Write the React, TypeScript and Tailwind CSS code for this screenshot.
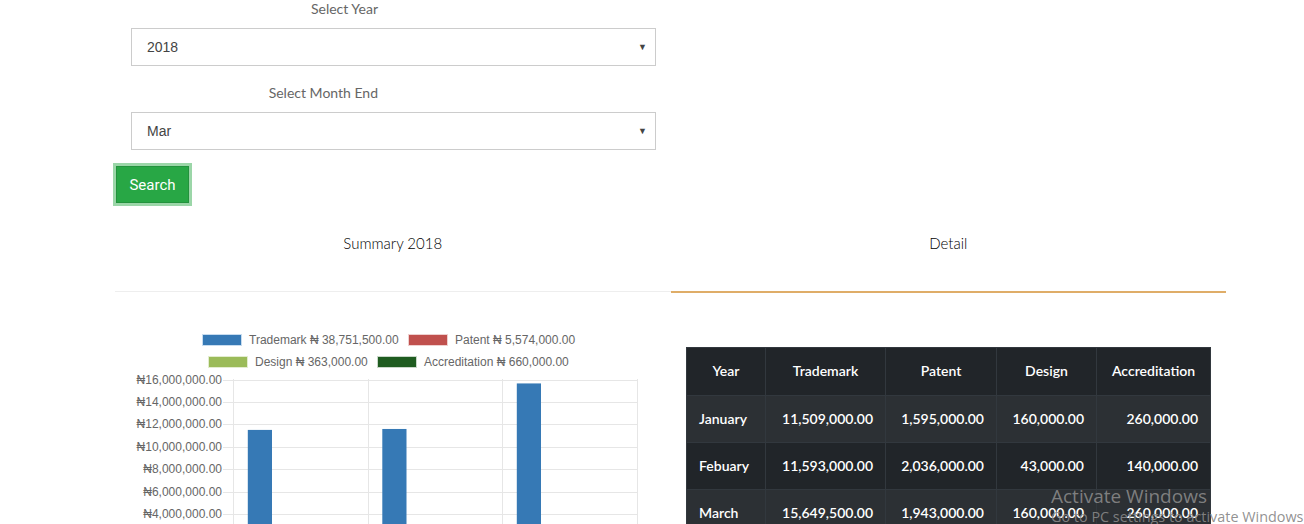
import React from "react";

function FakeSelect({ value, className }: { value: string; className?: string }) {
  return (
    <div
      className={`relative flex h-[38px] w-[525px] items-center border border-[#ccc] bg-white pl-[15px] pt-[1px] font-['Liberation_Sans',Arial,sans-serif] text-[14px] text-[#444] ${className ?? ""}`}
    >
      {value}
      <span className="absolute right-[8px] top-[14px] text-[9px] leading-[9px] text-[#444]">▼</span>
    </div>
  );
}

const gridYs = Array.from({ length: 9 }, (_, i) => 86.5 + i * 22.45);
const yLabels = [
  "₦16,000,000.00",
  "₦14,000,000.00",
  "₦12,000,000.00",
  "₦10,000,000.00",
  "₦8,000,000.00",
  "₦6,000,000.00",
  "₦4,000,000.00",
  "₦2,000,000.00",
  "₦0.00",
];
const datasets = [
  { color: "#3679b5", values: [11509000, 11593000, 15649500] },
  { color: "#c0504d", values: [1595000, 2036000, 1943000] },
  { color: "#9bbb59", values: [160000, 43000, 160000] },
  { color: "#1f5c20", values: [260000, 140000, 260000] },
];
const zeroY = 86.5 + 8 * 22.45;

function Chart() {
  return (
    <svg width={555} height={231} className="block" style={{ fontFamily: "'Liberation Sans', Arial, sans-serif" }}>
      <rect x={87.5} y={41.5} width={39} height={11} fill="#3679b5" stroke="#c7dcef" />
      <text x={134} y={47} dominantBaseline="central" fontSize={12} fill="#666">Trademark ₦ 38,751,500.00</text>
      <rect x={293.5} y={41.5} width={39} height={11} fill="#c0504d" stroke="#efd0cf" />
      <text x={340} y={47} dominantBaseline="central" fontSize={12} fill="#666">Patent ₦ 5,574,000.00</text>
      <rect x={93.5} y={63.5} width={39} height={11} fill="#9bbb59" stroke="#e3edcf" />
      <text x={140} y={69} dominantBaseline="central" fontSize={12} fill="#666">Design ₦ 363,000.00</text>
      <rect x={262.5} y={63.5} width={39} height={11} fill="#1f5c20" stroke="#c9d8c9" />
      <text x={309} y={69} dominantBaseline="central" fontSize={12} fill="#666">Accreditation ₦ 660,000.00</text>

      {gridYs.map((y, i) => (
        <line key={"h" + i} x1={108} x2={522} y1={Math.round(y) + 0.5} y2={Math.round(y) + 0.5} stroke="#e6e6e6" />
      ))}
      {[118, 252.5, 387, 522].map((x, i) => (
        <line key={"v" + i} x1={Math.round(x) + 0.5} x2={Math.round(x) + 0.5} y1={86} y2={280} stroke="#e6e6e6" />
      ))}
      {gridYs.map((y, i) => (
        <text key={"t" + i} x={107} y={y} textAnchor="end" dominantBaseline="central" fontSize={12} fill="#666">
          {yLabels[i]}
        </text>
      ))}

      {datasets.map((d, di) =>
        d.values.map((v, ci) => {
          const x = 118 + ci * 134.5 + 13.45 + di * 26.9 + 1.35;
          const h = (v / 2000000) * 22.45;
          return <rect key={di + "-" + ci} x={x} y={zeroY - h} width={24.2} height={h} fill={d.color} />;
        })
      )}
    </svg>
  );
}

const rows = [
  ["January", "11,509,000.00", "1,595,000.00", "160,000.00", "260,000.00"],
  ["Febuary", "11,593,000.00", "2,036,000.00", "43,000.00", "140,000.00"],
  ["March", "15,649,500.00", "1,943,000.00", "160,000.00", "260,000.00"],
];
const colW = ["w-[79px]", "w-[120px]", "w-[111px]", "w-[100px]", "w-[114px]"];

function DataTable() {
  return (
    <table className="w-[524px] table-fixed border-collapse bg-[#212529] font-['Lato',sans-serif] text-[14px] text-white">
      <colgroup>
        {colW.map((w, i) => (
          <col key={i} className={w} />
        ))}
      </colgroup>
      <thead>
        <tr className="h-[48px]">
          {["Year", "Trademark", "Patent", "Design", "Accreditation"].map((h) => (
            <th key={h} className="border border-[#32383e] px-[12px] pb-[2px] text-center font-semibold">
              {h}
            </th>
          ))}
        </tr>
      </thead>
      <tbody>
        {rows.map((r, ri) => (
          <tr key={ri} className={`h-[47px] ${ri % 2 === 0 ? "bg-[#2c3034]" : "bg-[#212529]"}`}>
            {r.map((c, ci) => (
              <td
                key={ci}
                className={`border border-[#32383e] px-[12px] pb-[2px] font-semibold ${ci === 0 ? "text-left" : "text-right"}`}
              >
                {c}
              </td>
            ))}
          </tr>
        ))}
      </tbody>
    </table>
  );
}

export default function App() {
  return (
    <div className="relative h-[524px] w-[1304px] overflow-hidden bg-white font-['Lato',sans-serif]">
      <div className="ml-[115px] w-[1111px]">
        <div className="ml-[16px] w-[525px]">
          <div className="w-[247px] text-right text-[14px] leading-[18px] text-[#666]">Select Year</div>
          <FakeSelect value="2018" className="mt-[10px]" />
          <div className="mt-[18px] w-[247px] text-right text-[14px] leading-[18px] text-[#666]">Select Month End</div>
          <FakeSelect value="Mar" className="mt-[10px]" />
        </div>
        <button className="ml-[1px] mt-[16px] flex h-[37px] w-[73px] items-center justify-center border border-[#23923d] pt-[2px] bg-[#28a745] font-['Roboto',sans-serif] text-[15px] text-white shadow-[0_0_0_3px_rgba(72,180,97,0.55)]">
          Search
        </button>
        <div className="mt-[27px] flex items-start">
          <div className="h-[62px] w-1/2 border-b border-[#eee] text-center text-[15px] font-light leading-[26px] text-[#000]">
            Summary 2018
          </div>
          <div className="h-[63px] w-1/2 border-b-2 border-[#dfad68] text-center text-[15px] font-light leading-[26px] text-[#000]">
            Detail
          </div>
        </div>
        <div className="flex">
          <div className="w-[555px]">
            <Chart />
          </div>
          <div className="ml-[16px] pt-[54px]">
            <DataTable />
          </div>
        </div>
      </div>
      <div className="pointer-events-none absolute left-[1051px] top-[484px] font-['Open_Sans',sans-serif] text-[rgba(135,135,135,0.92)]">
        <div className="text-[19px] leading-[24px]">Activate Windows</div>
        <div className="text-[14.4px] leading-[18px]">Go to PC settings to activate Windows</div>
      </div>
    </div>
  );
}
